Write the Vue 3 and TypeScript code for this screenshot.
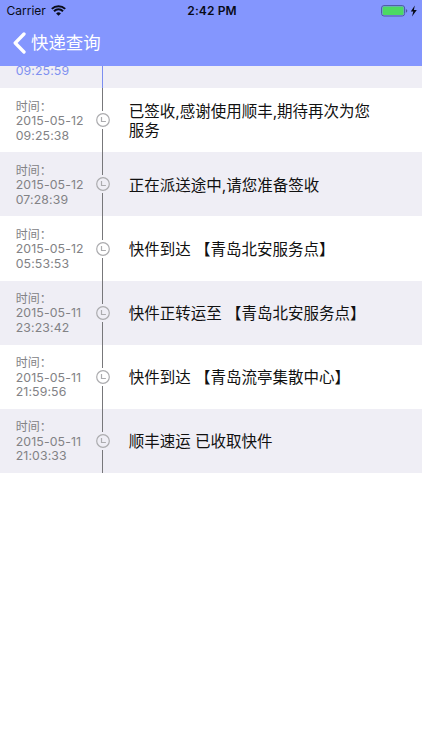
<script setup lang="ts">
interface TrackEvent {
  date: string
  time: string
  text: string
}

const events: TrackEvent[] = [
  { date: '2015-05-12', time: '09:25:38', text: '已签收,感谢使用顺丰,期待再次为您服务' },
  { date: '2015-05-12', time: '07:28:39', text: '正在派送途中,请您准备签收' },
  { date: '2015-05-12', time: '05:53:53', text: '快件到达 【青岛北安服务点】' },
  { date: '2015-05-11', time: '23:23:42', text: '快件正转运至 【青岛北安服务点】' },
  { date: '2015-05-11', time: '21:59:56', text: '快件到达 【青岛流亭集散中心】' },
  { date: '2015-05-11', time: '21:03:33', text: '顺丰速运 已收取快件' },
]
</script>

<template>
  <div class="screen">
    <header>
      <div class="status">
        <div class="carrier">
          <span>Carrier</span>
          <svg class="wifi" width="15" height="11" viewBox="0 0 15 11">
            <path d="M.8 3.9a9.6 9.6 0 0 1 13.4 0" />
            <path d="M3 6.2a6.4 6.4 0 0 1 9 0" />
            <path class="dot" d="M7.5 10.8 5.1 8.4a3.4 3.4 0 0 1 4.8 0z" />
          </svg>
        </div>
        <span class="clock">2:42 PM</span>
        <div class="power">
          <svg width="37" height="12" viewBox="0 0 37 12">
            <rect x=".6" y=".6" width="23" height="10.4" rx="2.4" fill="none" stroke="#4d59a0" stroke-width="1" />
            <rect x="1.6" y="1.6" width="21" height="8.4" rx="1.3" fill="#4cd964" />
            <path d="M24.9 3.9q1.4.6 1.4 1.9t-1.4 1.9z" fill="#4d59a0" />
            <path d="M33.8.5 29.8 6.4h2.5l-1.3 5 4.8-6.4h-2.9z" fill="#080b18" />
          </svg>
        </div>
      </div>
      <div class="nav">
        <svg width="13" height="22" viewBox="0 0 13 22">
          <path d="M11 2 2.2 11 11 20" />
        </svg>
        <h1>快递查询</h1>
      </div>
    </header>

    <main>
      <div class="latest">
        <div class="stamp">09:25:59</div>
        <div class="rail"><i class="line"></i></div>
      </div>
      <div v-for="event in events" :key="event.time" class="row">
        <div class="stamp">
          <div class="label">时间：</div>
          <div>{{ event.date }}</div>
          <div>{{ event.time }}</div>
        </div>
        <div class="rail">
          <i class="line"></i>
          <svg width="14" height="14" viewBox="0 0 14 14">
            <circle cx="7" cy="7" r="6.3" />
            <path d="M5.5 4v4.5h4.4" />
          </svg>
          <i class="line"></i>
        </div>
        <p>{{ event.text }}</p>
      </div>
    </main>
  </div>
</template>

<style>
body {
  background: #fff;
}
</style>

<style scoped>
.screen {
  height: 750px;
  overflow: hidden;
  background: #fff;
  font-family: Inter, "Noto Sans CJK SC", sans-serif;
}
header {
  height: 66px;
  box-sizing: border-box;
  background: #8496fe;
}
.status {
  height: 21px;
  display: grid;
  grid-template-columns: 1fr auto 1fr;
  align-items: center;
  padding: 0 4px 0 6px;
  font-size: 12px;
  color: #080b18;
}
.carrier {
  display: flex;
  align-items: center;
  gap: 5px;
  padding-left: 0.5px;
}
.wifi path {
  fill: none;
  stroke: #080b18;
  stroke-width: 2;
}
.wifi .dot {
  fill: #080b18;
  stroke: none;
}
.clock {
  font-weight: 600;
  letter-spacing: 0.1px;
}
.power {
  display: flex;
  justify-content: flex-end;
}
.nav {
  height: 44px;
  display: flex;
  align-items: center;
  gap: 5px;
  padding-left: 13px;
}
.nav path {
  fill: none;
  stroke: #fff;
  stroke-width: 3.3;
  stroke-linecap: round;
  stroke-linejoin: round;
}
h1 {
  margin: 0;
  font-size: 17.4px;
  font-weight: 400;
  line-height: 24px;
  color: #fff;
}
.latest,
.row {
  display: grid;
  grid-template-columns: 80px 14px 250px;
  padding-left: 15.7px;
  background: #fff;
}
.latest {
  height: 22.2px;
}
.row {
  height: 64.15px;
}
.latest,
.row:nth-child(odd) {
  background: #efeef5;
}
.stamp {
  font-size: 12.3px;
  line-height: 14.5px;
  letter-spacing: 0.12px;
  color: #828285;
  align-self: center;
  padding-top: 2px;
}
.latest .stamp {
  color: #7f91f0;
  align-self: start;
  padding-top: 0;
  margin-top: -2px;
}
.label {
  font-size: 12px;
  letter-spacing: 0;
}
.rail {
  display: flex;
  flex-direction: column;
  align-items: center;
  gap: 2px;
}
.line {
  width: 1px;
  flex: 1;
  background: #77777a;
}
.latest .line {
  background: #7c8ef0;
}
.rail svg {
  flex: none;
  fill: none;
  stroke: #acacaf;
  stroke-width: 1.2;
}
p {
  margin: 0 0 0 19px;
  padding-top: 3px;
  width: 250px;
  align-self: center;
  font-size: 15.5px;
  line-height: 18.5px;
  color: #111;
}
</style>
